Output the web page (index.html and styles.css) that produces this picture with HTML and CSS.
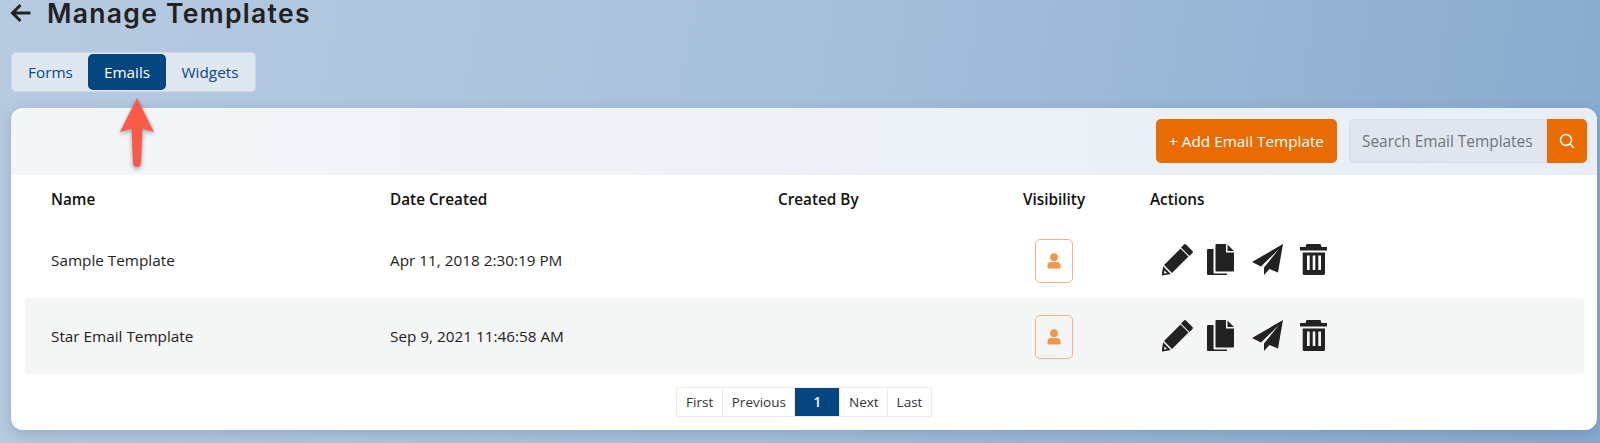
FILE: index.html
```html
<!DOCTYPE html>
<html lang="en">
<head>
<meta charset="utf-8">
<title>Manage Templates</title>
<link rel="stylesheet" href="styles.css">
</head>
<body>
<div class="page">
  <header class="title-row">
    <svg class="back" viewBox="0 0 24 22" width="24" height="22"><path d="M21.500 11H4M11.500 3 3.500 11l8 8" fill="none" stroke="#222" stroke-width="3"/></svg>
    <h1>Manage Templates</h1>
  </header>
  <nav class="tabs">
    <a class="tab">Forms</a>
    <a class="tab active">Emails</a>
    <a class="tab">Widgets</a>
  </nav>
  <svg class="arrow" viewBox="0 0 36 72" width="36" height="72"><path d="M18 1 1 35l11.500-3.500L14 66q.3 4 4 4t4-4l1.500-34.500L35 35z" fill="#fb5a4b"/></svg>
  <main class="card">
    <div class="toolbar">
      <button class="add">+ Add Email Template</button>
      <div class="search">
        <span class="search-input">Search Email Templates</span>
        <span class="search-btn"><svg viewBox="0 0 16 16" width="16" height="16"><circle cx="7" cy="7" r="5.500" fill="none" stroke="#fff" stroke-width="1.500"/><path d="M11 11l4 4" stroke="#fff" stroke-width="1.500"/></svg></span>
      </div>
    </div>
    <div class="table">
      <div class="row head">
        <div>Name</div><div>Date Created</div><div>Created By</div><div>Visibility</div><div>Actions</div>
      </div>
      <div class="row">
        <div>Sample Template</div><div>Apr 11, 2018 2:30:19 PM</div><div></div>
        <div><span class="vis"><svg viewBox="0 0 14 16" width="14" height="16"><circle cx="7" cy="4.200" r="3.900"/><path d="M0.500 15.500v-3a3.500 3.500 0 0 1 3.500-3.500h6a3.500 3.500 0 0 1 3.500 3.500v3z"/></svg></span></div>
        <div class="actions">
          <svg viewBox="0 0 32 32" width="32" height="32"><path d="M22 0.500q1-.8 2 0l6.500 6.500q.8 1 0 2l-3 3-8.500-8.500zM18.500 4.500l8 8L10 29l-8-8zM1.200 22.200 8.800 30 0.500 31.500q-.9 0-.8-.9z"/><path d="M2.500 26.500l2.500 2.500-3 .5z" fill="#fff"/></svg>
          <svg viewBox="0 0 32 32" width="32" height="32"><path d="M9.500 0H19v8.500h8v18a1 1 0 0 1-1 1H9.500a1 1 0 0 1-1-1V1a1 1 0 0 1 1-1zM20.500 0.500 27 7h-6.500zM6.500 5v23.500a1 1 0 0 0 1 1H20V31H1a1 1 0 0 1-1-1V6a1 1 0 0 1 1-1z"/></svg>
          <svg viewBox="0 0 32 32" width="32" height="32"><path d="M31 0 0 18l9 4.500L27 5 12 23.500V31l5.500-6 8.500 3.500z"/></svg>
          <svg viewBox="0 0 32 32" width="32" height="32"><path d="M9.500 0h14l1 3H30v3.500H3V3h5.500zM5.700 8.500H28V29.500a1.500 1.500 0 0 1-1.500 1.500H7.200a1.500 1.500 0 0 1-1.500-1.500zM10 11.500V26h2.700V11.500zM15.700 11.500V26h2.600V11.500zM21.300 11.500V26H24V11.500z" fill-rule="evenodd"/></svg>
        </div>
      </div>
      <div class="row alt">
        <div>Star Email Template</div><div>Sep 9, 2021 11:46:58 AM</div><div></div>
        <div><span class="vis"><svg viewBox="0 0 14 16" width="14" height="16"><circle cx="7" cy="4.200" r="3.900"/><path d="M0.500 15.500v-3a3.500 3.500 0 0 1 3.500-3.500h6a3.500 3.500 0 0 1 3.500 3.500v3z"/></svg></span></div>
        <div class="actions">
          <svg viewBox="0 0 32 32" width="32" height="32"><path d="M22 0.500q1-.8 2 0l6.500 6.500q.8 1 0 2l-3 3-8.500-8.500zM18.500 4.500l8 8L10 29l-8-8zM1.200 22.200 8.800 30 0.500 31.500q-.9 0-.8-.9z"/><path d="M2.500 26.500l2.500 2.500-3 .5z" fill="#f4f5f5"/></svg>
          <svg viewBox="0 0 32 32" width="32" height="32"><path d="M9.500 0H19v8.500h8v18a1 1 0 0 1-1 1H9.500a1 1 0 0 1-1-1V1a1 1 0 0 1 1-1zM20.500 0.500 27 7h-6.500zM6.500 5v23.500a1 1 0 0 0 1 1H20V31H1a1 1 0 0 1-1-1V6a1 1 0 0 1 1-1z"/></svg>
          <svg viewBox="0 0 32 32" width="32" height="32"><path d="M31 0 0 18l9 4.500L27 5 12 23.500V31l5.500-6 8.500 3.500z"/></svg>
          <svg viewBox="0 0 32 32" width="32" height="32"><path d="M9.500 0h14l1 3H30v3.500H3V3h5.500zM5.700 8.500H28V29.500a1.500 1.500 0 0 1-1.500 1.500H7.200a1.500 1.500 0 0 1-1.500-1.500zM10 11.500V26h2.700V11.500zM15.700 11.500V26h2.600V11.500zM21.300 11.500V26H24V11.500z" fill-rule="evenodd"/></svg>
        </div>
      </div>
    </div>
    <div class="pager">
      <a>First</a><a>Previous</a><a class="current">1</a><a>Next</a><a>Last</a>
    </div>
  </main>
</div>
</body>
</html>
```
FILE: styles.css
```css
* { box-sizing: border-box; }
html, body { margin: 0; height: 443px; overflow: hidden; }
body {
  font-family: "Open Sans", sans-serif;
  font-size: 15.300px;
  color: #222;
  background: linear-gradient(100deg, #b7cbe0 0%, #a6c0db 50%, #88aace 100%);
}
.page { position: relative; padding: 0 3px 0 11px; }
.title-row { display: flex; align-items: center; gap: 14px; height: 26px; margin-left: -2px; }
.back { flex: none; }
h1 { margin: 0; font-family: Inter, sans-serif; font-size: 26.500px; font-weight: 600; color: #222; line-height: 26px; letter-spacing: 1.300px; }
.tabs {
  display: inline-flex;
  margin-top: 26px;
  height: 40px;
  padding: 1px;
  background: #dfe7f1;
  border: 1px solid #cdd8e5;
  border-radius: 5px;
  vertical-align: top;
}
.tab { display: flex; align-items: center; justify-content: center; width: 75px; color: #054a85; }
.tab.active { width: 78px; background: #054681; color: #fff; border-radius: 5px; font-weight: 500; }
.tab:last-child { width: 88px; }
.arrow { position: absolute; left: 119px; top: 97px; filter: drop-shadow(0 2px 2px rgba(0,0,0,.35)); }
.card {
  margin-top: 16px;
  height: 322px;
  background: #fff;
  border-radius: 12px;
  overflow: hidden;
  box-shadow: 0 4px 14px rgba(50,70,100,.22);
}
.toolbar {
  display: flex;
  justify-content: flex-end;
  gap: 12px;
  height: 67px;
  padding: 11px 10px 0 0;
  background: linear-gradient(90deg, #f3f6f9, #e8eef7);
}
.add {
  width: 181px;
  height: 44px;
  border: 0;
  border-radius: 5px;
  background: #e96c03;
  color: #fff;
  font: 500 15.300px "Open Sans", sans-serif;
}
.search { display: flex; width: 238px; height: 44px; }
.search-input {
  flex: 1;
  display: flex;
  align-items: center;
  padding-left: 12px;
  background: #e0e5ee;
  border: 1px solid #d6dce6;
  border-radius: 5px 0 0 5px;
  color: #6d757f;
  font-size: 15.400px;
  white-space: nowrap;
}
.search-btn {
  width: 40px;
  display: flex;
  align-items: center;
  justify-content: center;
  background: #e96c03;
  border-radius: 0 5px 5px 0;
}
.table { padding: 0 13px 0 14px; }
.row {
  display: grid;
  grid-template-columns: 339px 388px 245px 127px 1fr;
  align-items: center;
  height: 76px;
  padding-left: 26px;
  border-radius: 4px;
}
.row.head { height: 47px; font-weight: 600; color: #111; }
.row.alt { background: #f4f5f5; }
.vis {
  display: flex;
  align-items: center;
  justify-content: center;
  width: 38px;
  height: 44px;
  margin: 1px 0 0 12px;
  border: 1px solid #f5b083;
  border-radius: 5px;
  fill: #f2964d;
}
.actions { display: flex; gap: 13px; margin-left: 12px; fill: #222; }
.pager {
  display: flex;
  width: fit-content;
  margin: 13px auto 0;
  border: 1px solid #e9ebed;
  border-radius: 3px;
  font-size: 13.500px;
  color: #333;
}
.pager a { display: flex; align-items: center; justify-content: center; height: 28px; padding: 0 8.500px; border-left: 1px solid #e9ebed; }
.pager a:first-child { border-left: 0; padding: 0 9px; }
.pager a.current { width: 45px; background: #054681; color: #fff; font-weight: 600; }
```
